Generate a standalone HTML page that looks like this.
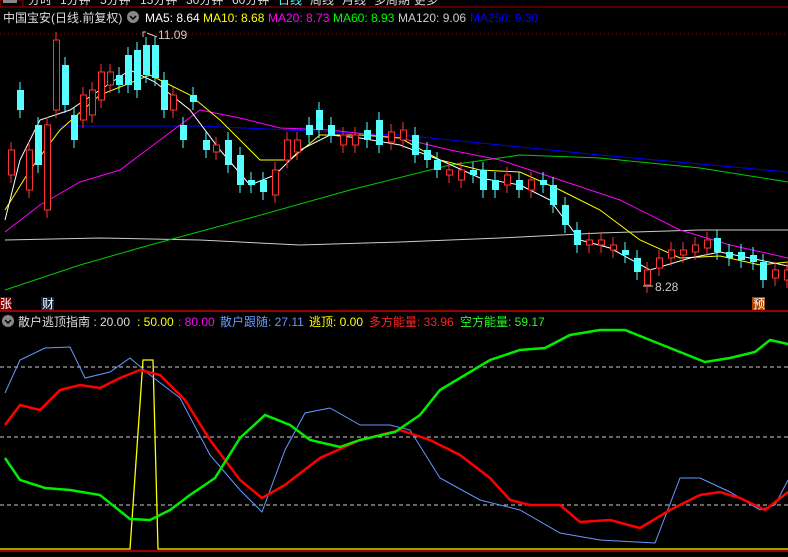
<!DOCTYPE html><html><head><meta charset="utf-8"><style>
body{margin:0;background:#000;width:788px;height:557px;overflow:hidden;font-family:"Liberation Sans","Noto Sans CJK SC",sans-serif}
svg{display:block}
text{font-family:"Liberation Sans","Noto Sans CJK SC",sans-serif;font-size:12px}
</style></head><body>
<svg width="788" height="557" viewBox="0 0 788 557">
<rect width="788" height="557" fill="#000"/>
<g fill="#ddd">
<text x="28" y="4">分时</text><text x="60" y="4">1分钟</text><text x="100" y="4">5分钟</text><text x="140" y="4">15分钟</text><text x="186" y="4">30分钟</text><text x="232" y="4">60分钟</text><text x="278" y="4" fill="#5ff">日线</text><text x="310" y="4">周线</text><text x="342" y="4">月线</text><text x="374" y="4">多周期</text><text x="414" y="4">更多</text>
</g>
<rect x="0" y="0" width="23" height="7" fill="#000" stroke="#a00"/>
<rect x="3" y="0" width="14" height="3" fill="#888"/>
<line x1="0" y1="7" x2="788" y2="7" stroke="#a00" />
<line x1="0" y1="311" x2="788" y2="311" stroke="#c00" stroke-width="1.5"/>
<line x1="0" y1="551" x2="788" y2="551" stroke="#c00" stroke-width="1.5"/>
<line x1="0" y1="34" x2="788" y2="34" stroke="#a00" stroke-dasharray="1,3"/>
<text x="3" y="22" fill="#ddd">中国宝安(日线.前复权)</text>
<circle cx="133" cy="17" r="6" fill="#888"/><path d="M130 16l3 3 3-3" stroke="#000" fill="none" stroke-width="1.5"/>
<text x="145" y="22" fill="#fff">MA5: 8.64</text>
<text x="203" y="22" fill="#ff0">MA10: 8.68</text>
<text x="268" y="22" fill="#f0f">MA20: 8.73</text>
<text x="333" y="22" fill="#0f0">MA60: 8.93</text>
<text x="398" y="22" fill="#ccc">MA120: 9.06</text>
<text x="470" y="22" fill="#00f">MA250: 9.30</text>
<text x="158" y="39" fill="#ccc">11.09</text>
<text x="655" y="291" fill="#ccc">8.28</text>
<path d="M146 32l-3 0 0 5M147 33l10 4M643 286l10 0" stroke="#ccc" fill="none"/>
<polyline fill="none" stroke="#ccc" points="5,240 100,238 200,240 300,245 400,242 500,238 600,233 700,230 788,230"/>
<polyline fill="none" stroke="#00f" points="60,126 200,126 400,135 600,155 788,172"/>
<polyline fill="none" stroke="#0c0" points="5,290 80,265 150,245 250,218 350,190 450,165 520,155 600,158 700,168 788,182"/>
<polyline fill="none" stroke="#f0f" points="5,232 40,205 80,182 120,170 160,140 200,110 240,118 280,128 330,130 400,138 450,150 500,160 560,180 620,200 680,230 730,245 788,258"/>
<polyline fill="none" stroke="#ff0" points="5,210 30,170 60,130 100,95 150,75 190,95 220,120 260,160 290,160 320,135 360,135 400,138 440,160 480,170 520,172 560,190 600,210 640,240 680,258 720,256 760,265 788,262"/>
<polyline fill="none" stroke="#fff" points="5,220 20,160 40,120 70,110 100,90 130,70 155,82 190,110 220,150 250,185 275,175 300,150 330,135 360,138 400,145 440,160 480,178 520,185 550,200 580,240 610,248 650,270 690,258 720,252 750,258 788,266"/>
<g id="c"></g>
<rect x="0" y="297" width="11" height="13" fill="#800"/><text x="0" y="308" fill="#fff">张</text>
<rect x="41" y="297" width="13" height="13" fill="#124"/><text x="42" y="308" fill="#fff">财</text>
<rect x="752" y="297" width="13" height="13" fill="#a40"/><text x="753" y="308" fill="#fff">预</text>
<circle cx="8" cy="321" r="6" fill="#888"/><path d="M5 320l3 3 3-3" stroke="#000" fill="none" stroke-width="1.5"/>
<text x="18" y="326" fill="#ddd">散户逃顶指南 : 20.00</text>
<text x="137" y="326" fill="#ff0">: 50.00</text>
<text x="178" y="326" fill="#f0f">: 80.00</text>
<text x="220" y="326" fill="#69f">散户跟随: 27.11</text>
<text x="309" y="326" fill="#ff0">逃顶: 0.00</text>
<text x="369" y="326" fill="#f22">多方能量: 33.96</text>
<text x="460" y="326" fill="#2f2">空方能量: 59.17</text>
<g stroke="#ccc" stroke-dasharray="4,3"><line x1="0" y1="367" x2="788" y2="367"/><line x1="0" y1="437" x2="788" y2="437"/><line x1="0" y1="505" x2="788" y2="505"/></g>
<polyline fill="none" stroke="#ff0" stroke-width="1.3" points="0,549 130,549 143,360 153,360 158,549 788,549"/>
<polyline fill="none" stroke="#69f" points="5,393 20,360 45,348 70,347 85,378 110,372 130,358 150,375 180,398 210,455 240,490 262,512 285,450 305,413 330,408 360,425 390,425 410,430 440,478 480,500 520,510 560,533 600,540 655,543 680,478 700,478 730,492 760,510 775,505 788,480"/>
<polyline fill="none" stroke="#f00" stroke-width="2.5" points="5,425 20,405 40,410 60,390 80,385 100,388 120,378 140,370 160,375 185,400 210,440 240,480 262,498 285,485 320,458 360,440 400,430 430,440 460,455 490,478 510,500 530,505 560,505 580,522 610,520 640,528 670,510 700,495 720,492 740,498 765,510 788,492"/>
<polyline fill="none" stroke="#0e0" stroke-width="2.5" points="5,458 20,480 45,488 70,490 100,495 130,519 150,520 170,510 190,495 215,478 240,438 265,415 290,425 310,440 340,447 360,440 395,432 420,415 440,390 465,375 490,360 520,350 545,348 570,335 600,330 625,330 650,340 675,350 705,362 730,358 755,352 770,340 788,344"/>
</svg>
<script>
var d=[[8,150,175,0],[17,90,110,1],[26,150,190,0],[35,125,165,1],[44,125,210,0],[53,40,110,0],[62,65,105,1],[71,115,140,1],[80,95,120,0],[89,90,115,0],[98,72,100,0],[107,72,85,0],[116,75,85,1],[125,55,85,1],[134,50,90,1],[143,45,75,1],[152,45,78,1],[161,80,110,1],[170,95,110,0],[180,125,140,1],[190,95,102,1],[203,140,150,1],[213,145,152,0],[225,140,165,1],[237,155,185,1],[248,180,185,1],[260,180,192,1],[272,170,195,0],[284,140,160,0],[294,140,152,0],[306,125,135,1],[316,110,130,1],[328,125,135,1],[340,135,145,0],[352,135,145,0],[364,130,140,1],[376,120,145,1],[388,132,142,0],[400,130,140,0],[412,135,155,1],[424,150,160,1],[434,160,170,1],[446,170,175,0],[458,170,180,0],[470,170,175,1],[480,170,190,1],[492,180,190,1],[504,175,185,0],[516,180,190,1],[528,180,190,0],[540,180,185,1],[550,185,205,1],[562,205,225,1],[574,230,245,1],[586,240,245,0],[598,240,245,0],[610,245,250,0],[622,250,255,1],[634,258,272,1],[644,270,285,0],[656,258,268,0],[668,250,258,0],[680,250,255,0],[692,245,252,0],[704,240,248,0],[714,238,252,1],[726,252,258,1],[738,252,260,1],[750,255,262,1],[760,262,280,1],[772,270,278,0],[784,270,280,0]];
var g=document.getElementById('c'),s='';
d.forEach(function(c){var col=c[3]?'#5ff':'#f33';s+='<line x1="'+(c[0]+3)+'" y1="'+(c[1]-8)+'" x2="'+(c[0]+3)+'" y2="'+(c[2]+8)+'" stroke="'+col+'"/>';
if(c[3])s+='<rect x="'+c[0]+'" y="'+c[1]+'" width="7" height="'+(c[2]-c[1])+'" fill="#5ff"/>';else s+='<rect x="'+(c[0]+.5)+'" y="'+c[1]+'" width="6" height="'+(c[2]-c[1])+'" fill="#000" stroke="#f33"/>';});
g.innerHTML=s;
</script>
</body></html>
